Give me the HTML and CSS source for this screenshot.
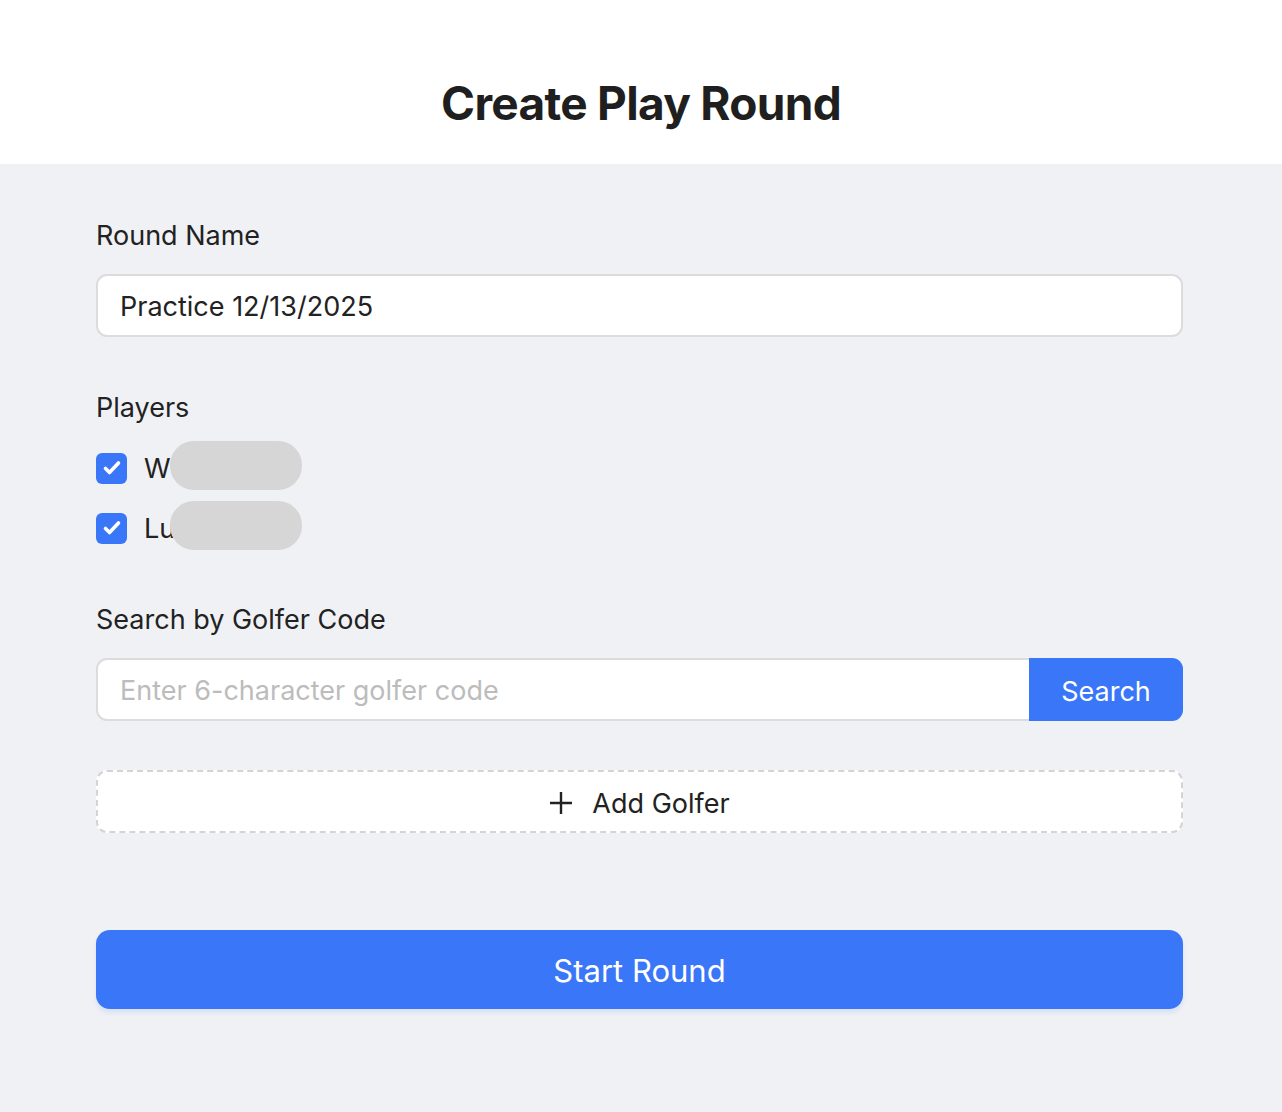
FILE: index.html
```html
<!DOCTYPE html>
<html>
<head>
<meta charset="utf-8">
<link rel="stylesheet" href="styles.css">
</head>
<body>
<header class="top">
  <h1 class="title">Create Play Round</h1>
</header>
<main class="content">
  <section class="field">
    <label class="label">Round Name</label>
    <div class="input">Practice 12/13/2025</div>
  </section>
  <section class="field players">
    <label class="label">Players</label>
    <div class="player">
      <span class="check"><svg width="22" height="22" viewBox="0 0 22 22"><path d="M4.5 11.5l4 4 9-9.5" fill="none" stroke="#fff" stroke-width="3.6" stroke-linecap="round" stroke-linejoin="round"/></svg></span>
      <span class="name">W</span>
      <span class="blur"></span>
    </div>
    <div class="player">
      <span class="check"><svg width="22" height="22" viewBox="0 0 22 22"><path d="M4.5 11.5l4 4 9-9.5" fill="none" stroke="#fff" stroke-width="3.6" stroke-linecap="round" stroke-linejoin="round"/></svg></span>
      <span class="name">Lu</span>
      <span class="blur"></span>
    </div>
  </section>
  <section class="field search">
    <label class="label">Search by Golfer Code</label>
    <div class="search-row">
      <div class="input placeholder">Enter 6-character golfer code</div>
      <button class="search-btn">Search</button>
    </div>
  </section>
  <div class="add">
    <svg width="24" height="24" viewBox="0 0 24 24"><path d="M12 1v22M1 12h22" stroke="#222" stroke-width="2.4" fill="none"/></svg>
    <span>Add Golfer</span>
  </div>
  <button class="start">Start Round</button>
</main>
</body>
</html>
```
FILE: styles.css
```css
* { box-sizing: border-box; }
html, body { margin: 0; padding: 0; }
body {
  background: #f0f1f5;
  font-family: Inter, "Noto Sans", sans-serif;
  color: #1f1f1f;
  height: 1112px;
}
.top {
  background: #fff;
  height: 164px;
  display: flex;
  align-items: center;
  justify-content: center;
  padding-top: 42px;
}
.title {
  margin: 0;
  font-size: 46px;
  font-weight: 700;
  letter-spacing: -0.7px;
  color: #1f1f1f;
}
.content {
  padding: 0 99px 0 96px;
}
.field { display: flex; flex-direction: column; }
.label {
  font-size: 27px;
  line-height: 32px;
  color: #222;
}
.field:first-child { padding-top: 56px; }
.field:first-child .label { margin-bottom: 22px; }
.input {
  height: 63px;
  background: #fff;
  border: 2px solid #dcdcdc;
  border-radius: 11px;
  padding: 2px 22px 0;
  display: flex;
  align-items: center;
  font-size: 27px;
  color: #222;
}
.players { margin-top: 55px; }
.players .label { margin-bottom: 28px; }
.player {
  position: relative;
  display: flex;
  align-items: center;
  height: 32px;
  margin-bottom: 28px;
}
.check {
  width: 31px;
  height: 31px;
  border-radius: 6px;
  background: #3a76f8;
  display: flex;
  align-items: center;
  justify-content: center;
}
.name {
  margin-left: 17px;
  font-size: 27px;
  color: #222;
}
.blur {
  position: absolute;
  left: 74px;
  top: -11px;
  width: 132px;
  height: 49px;
  border-radius: 24px;
  background: #d6d6d6;
}
.search { margin-top: 32px; }
.search .label { margin-bottom: 22px; }
.search-row { display: flex; }
.search-row .input {
  flex: 1;
  border-radius: 11px 0 0 11px;
  border-right: none;
}
.placeholder { color: #bcbcbc; }
.search-btn {
  width: 154px;
  height: 63px;
  border: none;
  padding: 3px 0 0;
  background: #3a76f8;
  color: #fff;
  font-family: Inter, "Noto Sans", sans-serif;
  font-size: 27px;
  border-radius: 0 11px 11px 0;
}
.add {
  margin-top: 49px;
  height: 63px;
  padding-top: 3px;
  background: #fff;
  border: 2px dashed #d4d4d4;
  border-radius: 11px;
  display: flex;
  align-items: center;
  justify-content: center;
  gap: 19px;
  font-size: 27px;
  color: #222;
}
.start {
  display: block;
  width: 100%;
  margin-top: 97px;
  height: 79px;
  border: none;
  padding: 2px 0 0;
  border-radius: 14px;
  background: #3a76f8;
  color: #fff;
  font-family: Inter, "Noto Sans", sans-serif;
  font-size: 31px;
  box-shadow: 0 4px 4px rgba(58, 118, 248, 0.12);
}
```
